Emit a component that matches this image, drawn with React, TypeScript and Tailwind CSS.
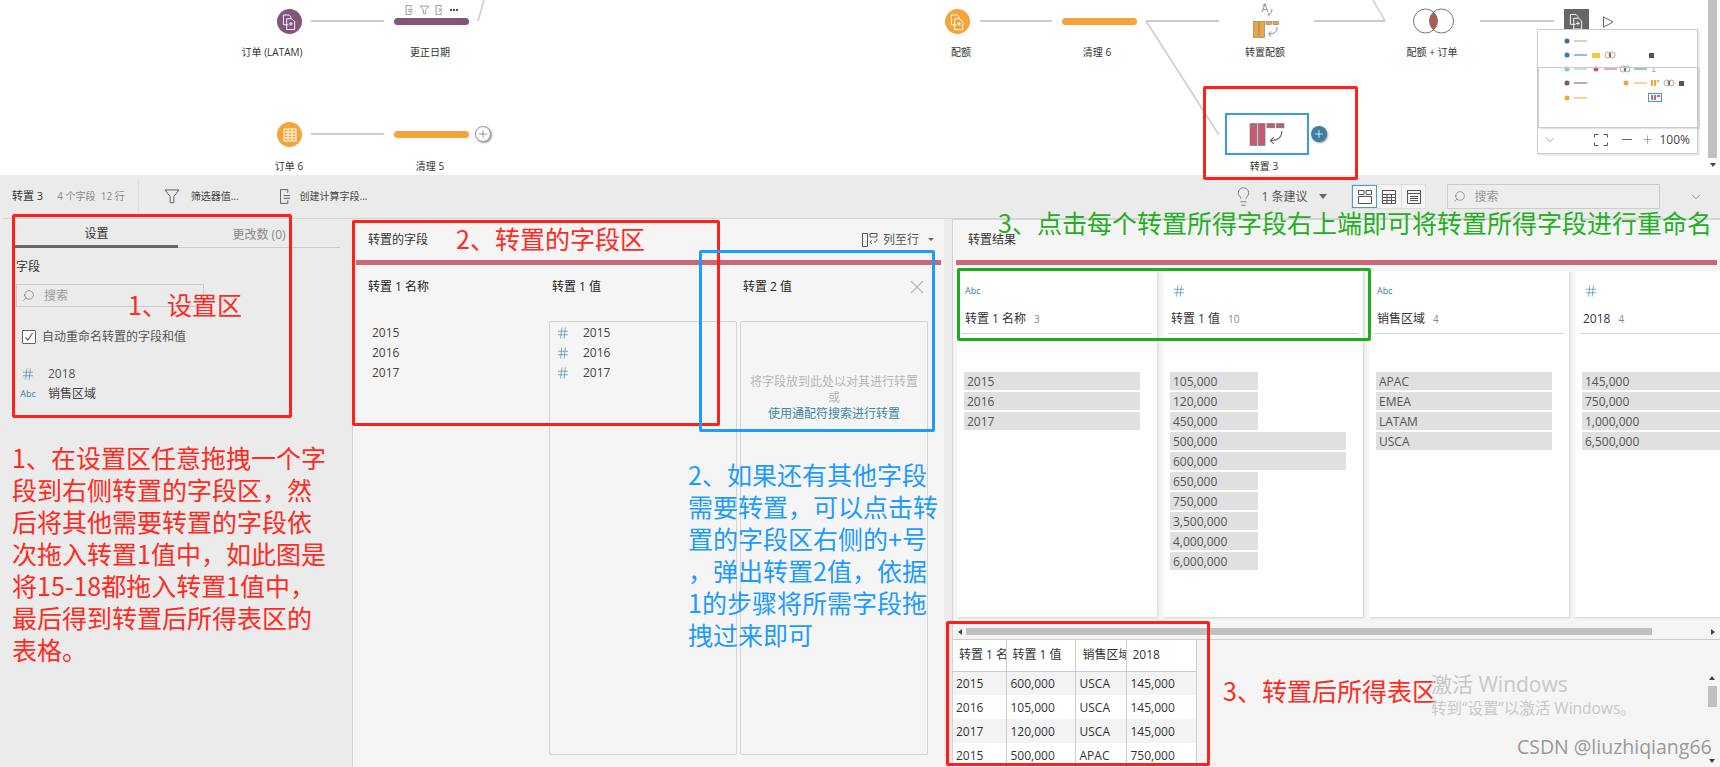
import { ChevronDown, Hash, Lightbulb, Plus, Search, X } from 'lucide-react';

const FONT = "font-['Open_Sans','Noto_Sans_CJK_SC',sans-serif]";
const NOTE = "font-['Noto_Sans_CJK_SC',sans-serif]";
const COMMA = '\uFF0C';

function DocIcon({ className }: { className?: string }) {
  return (
    <svg viewBox="0 0 12 16" fill="none" stroke="currentColor" strokeWidth="1" className={className}>
      <path d="M8.5 4V.5h-8v15h8V12M4 7h7M4 10h7" />
    </svg>
  );
}

function FunnelIcon({ className }: { className?: string }) {
  return (
    <svg viewBox="0 0 16 16" fill="none" stroke="currentColor" strokeWidth="1" className={className}>
      <path d="M.5 1h15L10 8v6.5H6V8z" />
    </svg>
  );
}

function XDocIcon({ className }: { className?: string }) {
  return (
    <svg viewBox="0 0 12 16" fill="none" stroke="currentColor" strokeWidth="1" className={className}>
      <path d="M8.5 4V.5h-8v15h8V12M5 5l5 6M10 5l-5 6" />
    </svg>
  );
}

function UnionIcon({ className }: { className?: string }) {
  return (
    <svg viewBox="0 0 16 17" fill="none" stroke="currentColor" strokeWidth="1" className={className}>
      <path d="M7 11.5H1.5V1h6l2 2v2" />
      <path d="M5 5h5l3.5 3v8.5H5z" />
      <path d="M9.5 8.5v4M7.5 10.5h4" />
    </svg>
  );
}

function PivotIcon({ fill, className }: { fill: string; className?: string }) {
  return (
    <svg viewBox="0 0 26 17" className={className}>
      <rect x="0.5" y="0.5" width="5" height="16" fill={fill} stroke="#777" strokeWidth="0.6" />
      <rect x="6.5" y="0.5" width="5" height="16" fill={fill} stroke="#777" strokeWidth="0.6" />
      <rect x="13" y="0.5" width="5.5" height="3" fill={fill} stroke="#777" strokeWidth="0.6" />
      <rect x="20" y="0.5" width="5.5" height="3" fill={fill} stroke="#777" strokeWidth="0.6" />
      <path d="M24 6c0 5-3 7-8 7M18 10.5 15.5 13l2.5 2.5" fill="none" stroke="#666" strokeWidth="0.8" />
    </svg>
  );
}

function VennIcon({ className }: { className?: string }) {
  return (
    <svg viewBox="0 0 41 26" className={className}>
      <path d="M20.5 4.1a12 12 0 0 1 0 17.8a12 12 0 0 1 0-17.800z" fill="#b55b4c" />
      <circle cx="12.5" cy="13" r="12" fill="none" stroke="#777" strokeWidth="1" />
      <circle cx="28.5" cy="13" r="12" fill="none" stroke="#777" strokeWidth="1" />
    </svg>
  );
}

function NodeCircle({ className, color, children }: { className: string; color: string; children: React.ReactNode }) {
  return (
    <div className={`absolute flex h-[25px] w-[25px] items-center justify-center rounded-full text-white ${color} ${className}`}>
      {children}
    </div>
  );
}

function NodeBar({ className, color }: { className: string; color: string }) {
  return <div className={`absolute h-[7px] w-[75px] rounded-full ${color} ${className}`} />;
}

function NodeLabel({ className, children }: { className: string; children: React.ReactNode }) {
  return (
    <span className={`absolute -translate-x-1/2 whitespace-nowrap text-[10px] leading-[14px] text-[#333] ${className}`}>
      {children}
    </span>
  );
}

function AddButton({ className, blue }: { className: string; blue?: boolean }) {
  return (
    <div
      className={`absolute flex h-[16px] w-[16px] items-center justify-center rounded-full shadow-[1px_1px_2px_rgba(0,0,0,0.4)] ${
        blue ? 'bg-[#3d7ea6] text-white' : 'border border-[#999] bg-white text-[#777]'
      } ${className}`}
    >
      <Plus size={12} strokeWidth={1.5} />
    </div>
  );
}

// thumbnail of the flow, drawn 1:1 inside the minimap
function MiniFlow() {
  const dots = [
    [29, 11, '#3f6f8f'], [29, 25, '#2f7ea8'], [29, 39, '#85c6cf'], [58, 39, '#cf5370'],
    [29, 53, '#864f7c'], [88, 53, '#f5a33b'], [29, 68, '#f5a33b'],
  ] as const;
  const lines = [
    [36, 49, 11, '#8cb87a'], [36, 49, 25, '#2f7ea8'], [36, 49, 39, '#85c6cf'], [66, 79, 39, '#d3546f'],
    [96, 109, 39, '#2f8f8a'], [36, 49, 53, '#864f7c'], [96, 109, 53, '#f5a33b'], [36, 49, 68, '#f5a33b'],
  ] as const;
  const venns = [[72, 25], [87, 39], [131, 53]] as const;
  return (
    <svg width="160" height="90" className="absolute left-0 top-0">
      {lines.map(([a, b, y, c], i) => (
        <line key={i} x1={a} x2={b} y1={y} y2={y} stroke={c} strokeWidth="1" />
      ))}
      {dots.map(([x, y, c], i) => (
        <circle key={i} cx={x} cy={y} r="2.5" fill={c} />
      ))}
      {venns.map(([x, y], i) => (
        <g key={i} fill="none" stroke="#aaa" strokeWidth="1">
          <circle cx={x - 2} cy={y} r="3" />
          <circle cx={x + 2} cy={y} r="3" />
          <rect x={x - 1} y={y - 2} width="2" height="4" fill={i === 1 ? '#2f8f8a' : '#b55b4c'} stroke="none" />
        </g>
      ))}
      <rect x="54" y="23" width="8" height="5" fill="#f2c93c" />
      <rect x="111" y="23" width="5" height="5" fill="#555" />
      <rect x="141" y="51" width="5" height="5" fill="#555" />
      <text x="114" y="42" fontSize="7" fill="#888">Σ</text>
      <g fill="#f5a33b">
        <rect x="113" y="50" width="2" height="6" />
        <rect x="116" y="50" width="2" height="6" />
        <rect x="119" y="50" width="2" height="2" />
      </g>
      <rect x="110.5" y="63.5" width="13" height="8" fill="none" stroke="#3d9ae0" strokeWidth="1" />
      <g fill="#cf5f77">
        <rect x="113" y="65" width="2" height="5" />
        <rect x="116" y="65" width="2" height="5" />
        <rect x="119" y="65" width="3" height="2" />
      </g>
    </svg>
  );
}

function Minimap() {
  return (
    <div className="absolute left-[1537px] top-[29px] h-[125px] w-[161px] border border-[#ccc] bg-white shadow-[1px_1px_2px_rgba(0,0,0,0.15)]">
      <MiniFlow />
      <div className="absolute left-0 top-[37px] h-[61px] w-[161px] border border-[#ccc] shadow-[1px_1px_1px_rgba(0,0,0,0.1)]" />
      <div className="absolute bottom-0 left-0 flex h-[27px] w-full items-center pl-[5px] pr-[7px] text-[#666]">
        <ChevronDown size={14} strokeWidth={1} />
        <svg viewBox="0 0 14 12" className="ml-auto h-[12px] w-[14px]" fill="none" stroke="#555" strokeWidth="1">
          <path d="M.5 3.500v-3h4M9.500.5h4v3M.5 8.500v3h4M9.500 11.500h4v-3" />
        </svg>
        <div className="ml-[14px] h-px w-[10px] bg-[#666]" />
        <Plus size={13} strokeWidth={1} className="ml-[9px]" />
        <span className="ml-[5px] text-[12px] text-[#444]">100%</span>
      </div>
    </div>
  );
}

function FlowCanvas() {
  return (
    <div className="flex h-[175px] bg-white">
      <div className="relative flex-1">
        <svg width="1720" height="175" className="absolute left-0 top-0" fill="none" stroke="#ccc" strokeWidth="2">
          <path d="M311 21h73M311 134h73M980 21h72M1146 21h73M1314 21h71M1480 21h74" />
          <path d="M1146 21l73 114M1373 0l12 21" strokeWidth="1.500" />
          <path d="M484 0l-6 21" strokeWidth="1.500" />
        </svg>

        <NodeCircle className="left-[277px] top-[9px]" color="bg-[#84557c]"><UnionIcon className="h-[16px] w-[15px]" /></NodeCircle>
        <NodeLabel className="left-[272px] top-[45px]">订单 (LATAM)</NodeLabel>
        <div className="absolute left-[405px] top-[5px] flex items-center gap-[6px] text-[#555]">
          <DocIcon className="h-[10px] w-[9px]" />
          <FunnelIcon className="h-[10px] w-[9px]" />
          <XDocIcon className="h-[10px] w-[9px]" />
          <span className="flex gap-px">
            <i className="h-[2px] w-[2px] bg-[#555]" />
            <i className="h-[2px] w-[2px] bg-[#555]" />
            <i className="h-[2px] w-[2px] bg-[#555]" />
          </span>
        </div>
        <NodeBar className="left-[394px] top-[18px]" color="bg-[#84557c]" />
        <NodeLabel className="left-[430px] top-[45px]">更正日期</NodeLabel>

        <NodeCircle className="left-[277px] top-[122px]" color="bg-[#f5a33b]">
          <svg viewBox="0 0 14 14" className="h-[14px] w-[14px]" fill="none" stroke="currentColor" strokeWidth="1">
            <path d="M1 1h12v12H1zM1 4h12M1 7h12M1 10h12M5 1v12M9 1v12" />
          </svg>
        </NodeCircle>
        <NodeLabel className="left-[289px] top-[159px]">订单 6</NodeLabel>
        <NodeBar className="left-[394px] top-[131px]" color="bg-[#f5a33b]" />
        <NodeLabel className="left-[430px] top-[159px]">清理 5</NodeLabel>
        <AddButton className="left-[475px] top-[126px]" />

        <NodeCircle className="left-[945px] top-[9px]" color="bg-[#f5a33b]"><UnionIcon className="h-[16px] w-[15px]" /></NodeCircle>
        <NodeLabel className="left-[961px] top-[45px]">配额</NodeLabel>
        <NodeBar className="left-[1062px] top-[18px]" color="bg-[#f5a33b]" />
        <NodeLabel className="left-[1097px] top-[45px]">清理 6</NodeLabel>

        <svg viewBox="0 0 12 13" className="absolute left-[1261px] top-[3px] h-[13px] w-[12px]" fill="none" stroke="#777" strokeWidth="0.8">
          <path d="M1 9l3-8 3 8M2 6.500h4M2 3A5 5 0 0 1 4 .5M11 6c0 3-1.500 5-4 5.500M8.500 10l-1.500 1.500 1.500 1" />
        </svg>
        <PivotIcon fill="#f5a33b" className="absolute left-[1253px] top-[21px] h-[17px] w-[26px]" />
        <NodeLabel className="left-[1265px] top-[45px]">转置配额</NodeLabel>

        <VennIcon className="absolute left-[1413px] top-[8px] h-[26px] w-[41px]" />
        <NodeLabel className="left-[1432px] top-[45px]">配额 + 订单</NodeLabel>

        <div className="absolute left-[1564px] top-[9px] flex h-[25px] w-[25px] items-center justify-center bg-[#666] text-white">
          <UnionIcon className="-mt-[1px] h-[17px] w-[15px]" />
        </div>
        <svg viewBox="0 0 11 12" className="absolute left-[1603px] top-[16px] h-[12px] w-[11px]" fill="none" stroke="#666" strokeWidth="1">
          <path d="M.5.800v10.400L10 6z" />
        </svg>

        <div className="absolute left-[1225px] top-[113px] flex h-[42px] w-[84px] items-center justify-center border-2 border-[#3d9ae0] bg-white">
          <PivotIcon fill="#c75a72" className="h-[23px] w-[36px]" />
        </div>
        <AddButton blue className="left-[1311px] top-[126px]" />
        <NodeLabel className="left-[1264px] top-[159px]">转置 3</NodeLabel>

        <Minimap />
      </div>
      <div className="flex w-[12px] flex-col pr-[3px]">
        <div className="h-[158px] bg-[#c0c0c0]" />
        <span className="mt-[5px] self-center border-x-[3px] border-t-[4px] border-x-transparent border-t-[#444]" />
      </div>
    </div>
  );
}

function Toolbar() {
  return (
    <div className="ml-[3px] flex h-[44px] items-center border-b border-[#d4d4d4]">
      <span className="ml-[9px] text-[11px] text-[#333]">转置 3</span>
      <span className="ml-[14px] text-[10px] text-[#888]">4 个字段&nbsp;&nbsp;12 行</span>
      <div className="ml-[13px] mb-[4px] h-[34px] w-px bg-[#ddd]" />
      <FunnelIcon className="ml-[25px] h-[15px] w-[16px] text-[#555]" />
      <span className="ml-[11px] text-[10px] text-[#444]">筛选器值...</span>
      <DocIcon className="ml-[41px] h-[15px] w-[11px] text-[#555]" />
      <span className="ml-[9px] text-[10px] text-[#444]">创建计算字段...</span>

      <Lightbulb size={21} strokeWidth={0.9} className="ml-[866px] text-[#666]" />
      <span className="ml-[7px] text-[12px] text-[#555]">1 条建议</span>
      <span className="ml-[12px] border-x-[4px] border-t-[5px] border-x-transparent border-t-[#666]" />

      <div className="ml-[24px] flex h-[25px] w-[75px] border border-[#ddd] bg-[#f5f5f5] text-[#555]">
        <div className="flex w-[25px] items-center justify-center border border-[#4b9bd6] bg-white">
          <svg viewBox="0 0 16 16" className="h-[16px] w-[16px]" fill="none" stroke="currentColor">
            <path d="M1.500 1.500h5.500v4H1.500zM9 1.500h5.500v4H9zM1.500 7.500h13v7h-13z" />
          </svg>
        </div>
        <div className="flex w-[25px] items-center justify-center border-r border-[#ddd]">
          <svg viewBox="0 0 16 16" className="h-[16px] w-[16px]" fill="none" stroke="currentColor">
            <path d="M1.500 1.500h13v13h-13zM1.500 5.500h13M1.500 8.500h13M1.500 11.500h13M6 5.500v9M10.500 5.500v9" />
          </svg>
        </div>
        <div className="flex w-[24px] items-center justify-center">
          <svg viewBox="0 0 16 16" className="h-[16px] w-[16px]" fill="none" stroke="currentColor">
            <path d="M1.500 1.500h13v13h-13zM1.500 4.500h13M4 7.500h8M4 9.500h8M4 11.500h8" />
          </svg>
        </div>
      </div>

      <div className="ml-[21px] flex h-[25px] w-[213px] items-center border border-[#ccc] bg-[#ededed] pl-[5px] text-[12px] text-[#999]">
        <Search size={13} strokeWidth={1} className="-scale-x-100 text-[#555]" />
        <span className="ml-[8px]">搜索</span>
      </div>
      <ChevronDown size={14} strokeWidth={1} className="ml-[29px] text-[#555]" />
    </div>
  );
}

function SettingsPanel() {
  return (
    <aside className="h-full w-[353px] shrink-0 border-r border-[#d4d4d4]">
      <div className="ml-[15px] flex h-[29px] w-[325px] border-b border-[#ccc] text-[12px]">
        <div className="flex h-[29px] w-[163px] items-center justify-center border-b-[3px] border-[#666] pt-[4px] text-[#333]">设置</div>
        <div className="flex h-[28px] flex-1 items-center justify-center pt-[4px] text-[#888]">更改数 (0)</div>
      </div>
      <div className="ml-[16px] mt-[11px] text-[12px] leading-[16px] text-[#333]">字段</div>
      <div className="ml-[16px] mt-[9px] flex h-[23px] w-[188px] items-center border border-[#ccc] pl-[5px] text-[12px] text-[#999]">
        <Search size={13} strokeWidth={1} className="-scale-x-100 text-[#555]" />
        <span className="ml-[9px]">搜索</span>
      </div>
      <div className="ml-[22px] mt-[23px] flex items-center text-[12px] leading-[14px] text-[#555]">
        <span className="flex h-[14px] w-[14px] items-center justify-center rounded-[1px] border border-[#666] bg-white">
          <svg viewBox="0 0 12 12" className="h-[12px] w-[12px]" fill="none" stroke="#666" strokeWidth="1.200">
            <path d="M2.500 6.500 5 9l4.500-7" />
          </svg>
        </span>
        <span className="ml-[6px]">自动重命名转置的字段和值</span>
      </div>
      <div className="ml-[20px] mt-[20px] flex h-[20px] items-center text-[12px] text-[#555]">
        <span className="flex w-[16px] justify-center text-[#3d7ea6]"><Hash size={14} strokeWidth={1.100} /></span>
        <span className="ml-[12px]">2018</span>
      </div>
      <div className="ml-[20px] flex h-[20px] items-center text-[12px] text-[#444]">
        <span className="w-[16px] text-center text-[9px] text-[#3d7ea6]">Abc</span>
        <span className="ml-[12px]">销售区域</span>
      </div>
    </aside>
  );
}

function PivotedFields() {
  return (
    <section className="flex h-full w-[591px] shrink-0 flex-col bg-[#f5f5f5]">
      <div className="flex h-[41px] shrink-0 items-center pl-[15px] pr-[10px] text-[12px]">
        <span className="text-[#333]">转置的字段</span>
        <svg viewBox="0 0 16 14" className="ml-auto h-[14px] w-[16px]" fill="none" stroke="#555" strokeWidth="1">
          <path d="M.5.500h5v13h-5zM8 .5h7v3.500H8zM15 6c0 2-1 3-3 3M10 7.500 8 9l2 2" />
        </svg>
        <span className="ml-[5px] text-[#555]">列至行</span>
        <span className="ml-[9px] border-x-[3px] border-t-[3px] border-x-transparent border-t-[#666]" />
      </div>
      <div className="mx-[3px] h-[5px] shrink-0 bg-[#cc6679]" />
      <div className="flex min-h-0 flex-1 pb-[12px] pl-[15px] text-[12px]">
        <div className="w-[181px]">
          <div className="flex h-[44px] items-center text-[#222]">转置 1 名称</div>
          <div className="mt-[12px] pl-[4px] pt-[2px] leading-[20px] text-[#444]">
            <div>2015</div>
            <div>2016</div>
            <div>2017</div>
          </div>
        </div>
        <div className="flex w-[188px] flex-col">
          <div className="flex h-[44px] items-center pl-[3px] text-[#222]">转置 1 值</div>
          <div className="mt-[12px] flex-1 rounded-[2px] border border-[#d4d4d4] pt-[1px] leading-[20px] text-[#444]">
            {['2015', '2016', '2017'].map((year) => (
              <div key={year} className="flex items-center">
                <span className="flex w-[22px] justify-center pl-[4px] text-[#3d7ea6]"><Hash size={14} strokeWidth={1.100} /></span>
                <span className="ml-[11px]">{year}</span>
              </div>
            ))}
          </div>
        </div>
        <div className="ml-[3px] flex w-[188px] flex-col">
          <div className="flex h-[44px] items-center justify-between pl-[3px] text-[#222]">
            转置 2 值
            <X size={22} strokeWidth={1.500} className="text-[#bbb]" />
          </div>
          <div className="mt-[12px] flex flex-1 flex-col rounded-[2px] border border-[#d4d4d4] pt-[52px] text-center leading-[16px] text-[#b5b5b5]">
            <div>将字段放到此处以对其进行转置</div>
            <div>或</div>
            <div className="text-[#3d86a5]">使用通配符搜索进行转置</div>
          </div>
        </div>
      </div>
    </section>
  );
}

const FIELD_CARDS = [
  { type: 'abc', name: '转置 1 名称', count: 3, short: false, rows: ['2015', '2016', '2017'] },
  {
    type: 'num', name: '转置 1 值', count: 10, short: true,
    rows: ['105,000', '120,000', '450,000', '500,000', '600,000', '650,000', '750,000', '3,500,000', '4,000,000', '6,000,000'],
  },
  { type: 'abc', name: '销售区域', count: 4, short: false, rows: ['APAC', 'EMEA', 'LATAM', 'USCA'] },
  { type: 'num', name: '2018', count: 4, short: false, rows: ['145,000', '750,000', '1,000,000', '6,500,000'] },
];

function FieldCard({ card }: { card: (typeof FIELD_CARDS)[number] }) {
  return (
    <div className="h-[346px] w-[200px] shrink-0 bg-white shadow-[1px_1px_2px_rgba(0,0,0,0.15)]">
      <div className="mx-[5px] h-[63px] border-b border-[#d4d4d4] pl-[3px]">
        <div className="flex h-[40px] items-center text-[#3d7ea6]">
          {card.type === 'abc' ? <span className="text-[9px]">Abc</span> : <Hash size={14} strokeWidth={1.100} className="ml-[1px]" />}
        </div>
        <div className="flex items-baseline text-[12px] leading-[16px] text-[#333]">
          {card.name}
          <span className="ml-[8px] text-[10px] text-[#888]">{card.count}</span>
        </div>
      </div>
      <div className="mt-[38px] flex flex-col gap-[2px] pl-[7px] text-[12px] text-[#555]">
        {card.rows.map((row, i) => (
          <div
            key={row}
            className={`h-[18px] pl-[3px] leading-[19px] bg-[#e0e0e0] ${
              card.short && i !== 3 && i !== 4 ? 'w-[88px]' : 'w-[176px]'
            }`}
          >
            {row}
          </div>
        ))}
      </div>
    </div>
  );
}

const TABLE_ROWS = [
  ['2015', '600,000', 'USCA', '145,000'],
  ['2016', '105,000', 'USCA', '145,000'],
  ['2017', '120,000', 'USCA', '145,000'],
  ['2015', '500,000', 'APAC', '750,000'],
];

function ResultTable() {
  return (
    <table className="w-[243px] table-fixed border-collapse self-start bg-white text-[12px] text-[#333]">
      <colgroup>
        <col className="w-[53px]" />
        <col className="w-[69px]" />
        <col className="w-[51px]" />
        <col className="w-[70px]" />
      </colgroup>
      <thead>
        <tr className="h-[31px] border-b border-[#ccc]">
          <th className="overflow-hidden whitespace-nowrap border-r border-[#ccc] pl-[6px] text-left font-normal">转置 1 名称</th>
          <th className="border-r border-[#ccc] pl-[6px] text-left font-normal">转置 1 值</th>
          <th className="overflow-hidden whitespace-nowrap border-r border-[#ccc] pl-[7px] text-left font-normal">销售区域</th>
          <th className="border-r border-[#ccc] pl-[6px] text-left font-normal">2018</th>
        </tr>
      </thead>
      <tbody>
        {TABLE_ROWS.map((row, i) => (
          <tr key={i} className={`h-[24px] ${i % 2 === 0 ? 'bg-[#f3f3f3]' : 'bg-white'}`}>
            {row.map((cell, j) => (
              <td key={j} className={`border-r border-[#ccc] pt-[2px] ${j === 0 ? 'pl-[3px]' : 'pl-[4px]'}`}>{cell}</td>
            ))}
          </tr>
        ))}
      </tbody>
    </table>
  );
}

function PivotResults() {
  return (
    <section className="ml-[8px] flex h-full min-w-0 flex-1 flex-col overflow-hidden border-l border-t border-[#d4d4d4] bg-[#f5f5f5]">
      <div className="flex h-[40px] shrink-0 items-center pl-[15px] text-[12px] text-[#333]">转置结果</div>
      <div className="ml-[3px] mr-[3px] h-[5px] shrink-0 bg-[#cc6679]" />
      <div className="ml-[4px] mt-[6px] flex h-[346px] shrink-0 gap-[6px]">
        {FIELD_CARDS.map((card) => <FieldCard key={card.name} card={card} />)}
      </div>
      <div className="mt-[11px] flex h-[7px] shrink-0 items-center px-[5px]">
        <span className="border-y-[3px] border-r-[4px] border-y-transparent border-r-[#444]" />
        <div className="ml-[4px] h-[7px] w-[686px] bg-[#c0c0c0]" />
        <span className="ml-auto border-y-[3px] border-l-[4px] border-y-transparent border-l-[#444]" />
      </div>
      <div className="mt-[4px] flex min-h-0 flex-1 border-t border-[#ccc]">
        <ResultTable />
        <div className="ml-auto mt-[32px] mr-[3px] flex w-[10px] flex-col items-center">
          <span className="mt-[4px] border-x-[3px] border-b-[4px] border-x-transparent border-b-[#444]" />
          <div className="mt-[6px] h-[21px] w-[9px] bg-[#c0c0c0]" />
          <span className="mt-auto mb-[4px] border-x-[3px] border-t-[4px] border-x-transparent border-t-[#444]" />
        </div>
      </div>
    </section>
  );
}

const RED_BOX = 'absolute rounded-[2px] border-[3px] border-[#ff2018]';
const RED_TEXT = `absolute whitespace-nowrap text-[25px] leading-[32px] text-[#ff2a1f] ${NOTE}`;

function Annotations() {
  return (
    <>
      <div className={`${RED_BOX} left-[1203px] top-[86px] h-[94px] w-[155px]`} />
      <div className={`${RED_BOX} left-[12px] top-[214px] h-[204px] w-[280px]`} />
      <div className={`${RED_BOX} left-[352px] top-[220px] h-[206px] w-[368px]`} />
      <div className={`${RED_BOX} left-[946px] top-[621px] h-[145px] w-[264px]`} />
      <div className="absolute left-[699px] top-[250px] h-[182px] w-[236px] rounded-[2px] border-[3px] border-[#1e9bff]" />
      <div className="absolute left-[957px] top-[268px] h-[73px] w-[414px] rounded-[2px] border-[3px] border-[#1dae1d]" />

      <span className={`${RED_TEXT} left-[128px] top-[288px]`}>1、设置区</span>
      <span className={`${RED_TEXT} left-[456px] top-[222px]`}>2、转置的字段区</span>
      <span className={`${RED_TEXT} left-[1223px] top-[674px]`}>3、转置后所得表区</span>
      <span className={`absolute left-[998px] top-[206px] whitespace-nowrap text-[25px] leading-[32px] text-[#22b022] ${NOTE}`}>
        3、点击每个转置所得字段右上端即可将转置所得字段进行重命名
      </span>
      <div className={`${RED_TEXT} left-[12px] top-[441px]`}>
        1、在设置区任意拖拽一个字<br />
        段到右侧转置的字段区{COMMA}然<br />
        后将其他需要转置的字段依<br />
        次拖入转置1值中{COMMA}如此图是<br />
        将15-18都拖入转置1值中{COMMA}<br />
        最后得到转置后所得表区的<br />
        表格。
      </div>
      <div className={`absolute left-[688px] top-[458px] whitespace-nowrap text-[25px] leading-[32px] text-[#1e9bff] ${NOTE}`}>
        2、如果还有其他字段<br />
        需要转置{COMMA}可以点击转<br />
        置的字段区右侧的+号<br />
        {COMMA}弹出转置2值{COMMA}依据<br />
        1的步骤将所需字段拖<br />
        拽过来即可
      </div>

      <span className="absolute left-[1431px] top-[670px] whitespace-nowrap text-[21px] leading-[28px] text-[#c8c8c8]">激活 Windows</span>
      <span className="absolute left-[1431px] top-[699px] whitespace-nowrap text-[15.500px] leading-[18px] text-[#c8c8c8]">转到“设置”以激活 Windows。</span>
      <span className="absolute left-[1517px] top-[735px] whitespace-nowrap text-[19.500px] leading-[24px] text-[#999]">CSDN @liuzhiqiang66</span>
    </>
  );
}

export default function App() {
  return (
    <div lang="zh-CN" className={`relative h-[767px] w-[1720px] overflow-hidden bg-[#ebebeb] ${FONT}`}>
      <FlowCanvas />
      <Toolbar />
      <div className="flex h-[548px]">
        <SettingsPanel />
        <PivotedFields />
        <PivotResults />
      </div>
      <Annotations />
    </div>
  );
}
